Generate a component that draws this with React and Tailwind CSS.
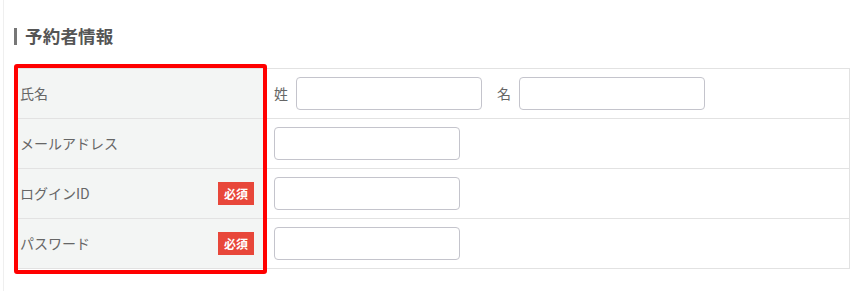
export default function App() {
  const font = { fontFamily: '"Noto Sans CJK JP", "Noto Sans", sans-serif' };
  const Badge = () => (
    <span className="flex h-[23px] w-[36px] items-center justify-center bg-[#e8473a] text-[12px] font-bold leading-none text-white">
      必須
    </span>
  );
  const Input = () => (
    <div className="h-[33px] w-[186px] rounded-[4px] border border-[#c4c4cc] bg-white" />
  );
  const rows = [
    { label: '氏名', req: false, name: true },
    { label: 'メールアドレス', req: false },
    { label: 'ログインID', req: true },
    { label: 'パスワード', req: true },
  ];
  return (
    <div className="relative h-[291px] w-[859px] overflow-hidden bg-white" style={font}>
      <div className="ml-[3px] h-full border-l border-[#efefef] pl-[10px] pt-[27px]">
        <div className="flex h-[18px] items-center gap-[8px]">
          <div className="h-[17px] w-[3px] bg-[#777]" />
          <span className="text-[17.5px] font-bold leading-none tracking-[0.2px] text-[#555]">予約者情報</span>
        </div>
        <div className="ml-[1px] mt-[23px] w-[835px] border-b border-r border-[#e2e2e2]">
          {rows.map((r) => (
            <div key={r.label} className="flex h-[50px] border-t border-[#e2e2e2]">
              <div className="flex w-[251px] items-center justify-between border-l border-r border-[#e2e2e2] bg-[#f3f5f4] pl-[4px] pr-[11px] text-[14px] text-[#666]">
                <span>{r.label}</span>
                {r.req && <Badge />}
              </div>
              <div className="flex flex-1 items-center pl-[8px] text-[14px] text-[#666]">
                {r.name ? (
                  <div className="flex items-center">
                    <span className="mr-[8px]">姓</span>
                    <Input />
                    <span className="ml-[15px] mr-[8px]">名</span>
                    <Input />
                  </div>
                ) : (
                  <Input />
                )}
              </div>
            </div>
          ))}
        </div>
      </div>
      <div className="pointer-events-none absolute left-[14px] top-[64px] h-[210px] w-[253px] rounded-[3px] border-4 border-[#ff0000]" />
    </div>
  );
}
